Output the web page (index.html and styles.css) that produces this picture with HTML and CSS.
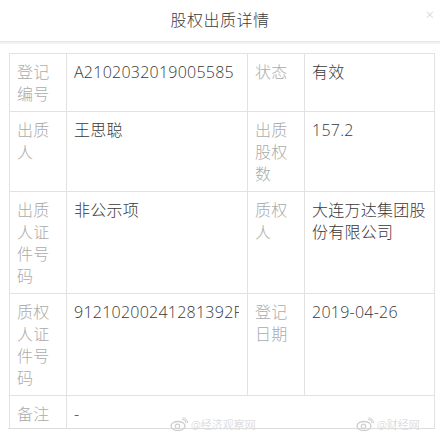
FILE: index.html
```html
<!DOCTYPE html>
<html lang="zh-CN">
<head>
    <meta charset="UTF-8">
    <meta name="viewport" content="width=device-width, initial-scale=1.0">
    <title>股权出质详情</title>
    <link rel="stylesheet" href="styles.css">
</head>
<body>
    <div class="modal">
        <div class="modal-header">
            <h1>股权出质详情</h1>
            <span class="close">×</span>
        </div>

        <div class="modal-body">
            <table class="detail-table">
                <colgroup>
                    <col class="col-label">
                    <col class="col-value">
                    <col class="col-label2">
                    <col class="col-value2">
                </colgroup>
                <tr>
                    <td class="label">登记编号</td>
                    <td><div class="clip">A2102032019005585</div></td>
                    <td class="label">状态</td>
                    <td>有效</td>
                </tr>
                <tr>
                    <td class="label">出质人</td>
                    <td>王思聪</td>
                    <td class="label">出质股权数</td>
                    <td>157.2</td>
                </tr>
                <tr>
                    <td class="label">出质人证件号码</td>
                    <td>非公示项</td>
                    <td class="label">质权人</td>
                    <td>大连万达集团股份有限公司</td>
                </tr>
                <tr>
                    <td class="label">质权人证件号码</td>
                    <td><div class="clip">91210200241281392F</div></td>
                    <td class="label">登记日期</td>
                    <td>2019-04-26</td>
                </tr>
                <tr>
                    <td class="label">备注</td>
                    <td colspan="3">-</td>
                </tr>
            </table>
        </div>

        <!-- watermarks -->
        <div class="mark mark-left">
            <svg width="18" height="14" viewBox="0 0 18 14">
                <ellipse cx="8" cy="9" rx="7" ry="4.5" fill="none" stroke="#cdcdcd" stroke-width="1.3"/>
                <circle cx="7.5" cy="9.3" r="2.2" fill="none" stroke="#cdcdcd" stroke-width="1.1"/>
                <path d="M12 2.5 a3.5 3.5 0 0 1 4 3.5" fill="none" stroke="#cdcdcd" stroke-width="1.1"/>
                <path d="M12.5 0.8 a5.5 5.5 0 0 1 5.2 5.4" fill="none" stroke="#cdcdcd" stroke-width="1"/>
            </svg>
            <span>@经济观察网</span>
        </div>
        <div class="mark mark-right">
            <svg width="18" height="14" viewBox="0 0 18 14">
                <ellipse cx="8" cy="9" rx="7" ry="4.5" fill="none" stroke="#cdcdcd" stroke-width="1.3"/>
                <circle cx="7.5" cy="9.3" r="2.2" fill="none" stroke="#cdcdcd" stroke-width="1.1"/>
                <path d="M12 2.5 a3.5 3.5 0 0 1 4 3.5" fill="none" stroke="#cdcdcd" stroke-width="1.1"/>
                <path d="M12.5 0.8 a5.5 5.5 0 0 1 5.2 5.4" fill="none" stroke="#cdcdcd" stroke-width="1"/>
            </svg>
            <span>@财经网</span>
        </div>
    </div>
</body>
</html>
```

FILE: styles.css
```css
* {
    margin: 0;
    padding: 0;
    box-sizing: border-box;
}

body {
    font-family: 'Open Sans', 'Noto Sans CJK SC', sans-serif;
    font-weight: 300;
    background: #fff;
    width: 440px;
    height: 438px;
    overflow: hidden;
}

.modal {
    position: relative;
    height: 438px;
}

.modal-header {
    position: relative;
    height: 42px;
    border-bottom: 1px solid #e6e6e6;
    box-shadow: 0 2px 0 #f3f3f3;
}

.modal-header h1 {
    text-align: center;
    font-size: 16px;
    font-weight: 300;
    line-height: 41px;
    color: #3c3c3c;
    letter-spacing: 0.5px;
}

.close {
    position: absolute;
    top: 4px;
    right: 6px;
    font-size: 15px;
    color: #d2d2d2;
}

.modal-body {
    margin: 11px 5px 0 8px;
    height: 376px;
    overflow: hidden;
    border-bottom: 1px solid #dcdcdc;
}

.detail-table {
    margin-left: 1px;
    width: 425px;
    border-collapse: collapse;
    table-layout: fixed;
    font-size: 16px;
    letter-spacing: 0.25px;
}

.col-label { width: 57px; }
.col-value { width: 181px; }
.col-label2 { width: 57px; }
.col-value2 { width: 130px; }

.detail-table td {
    border: 1px solid #e2e2e2;
    padding: 7px 8px 6px 7px;
    line-height: 22px;
    vertical-align: top;
    color: #383838;
}

.detail-table td.label {
    color: #ababab;
}

.clip {
    overflow: hidden;
    white-space: nowrap;
}

.mark {
    position: absolute;
    top: 416px;
    display: flex;
    align-items: center;
    gap: 3px;
    font-size: 11px;
    color: #d0d0d0;
    text-shadow: 0 0 1px #fff;
}

.mark-left {
    left: 170px;
}

.mark-right {
    left: 356px;
}
```
